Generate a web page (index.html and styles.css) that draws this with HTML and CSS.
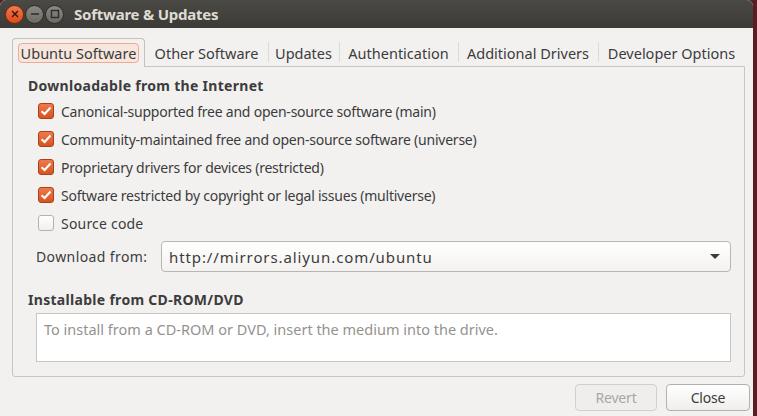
FILE: index.html
```html
<!DOCTYPE html>
<html>
<head>
<meta charset="utf-8">
<link rel="stylesheet" href="styles.css">
</head>
<body>
<div class="window">
  <div class="titlebar">
    <div class="wbtns">
      <span class="wb close"><svg width="8" height="8" viewBox="0 0 8 8"><path d="M1 1L7 7M7 1L1 7" stroke="#3a1a10" stroke-width="1.5"/></svg></span>
      <span class="wb"><svg width="10" height="8" viewBox="0 0 10 8"><path d="M1 4H9" stroke="#2e2d2a" stroke-width="1.6"/></svg></span>
      <span class="wb"><svg width="10" height="10" viewBox="0 0 10 10"><rect x="1.5" y="1.5" width="7" height="7" fill="none" stroke="#2e2d2a" stroke-width="1.4"/></svg></span>
    </div>
    <div class="title">Software &amp; Updates</div>
  </div>
  <div class="body">
    <div class="tabs">
      <div class="tab active t1"><span class="focus">Ubuntu Software</span></div>
      <div class="tab t2">Other Software</div>
      <div class="tab t3 sep">Updates</div>
      <div class="tab t4 sep">Authentication</div>
      <div class="tab t5 sep">Additional Drivers</div>
      <div class="tab t6 sep">Developer Options</div>
    </div>
    <div class="frame">
      <div class="heading">Downloadable from the Internet</div>
      <div class="checks">
        <div class="row"><span class="cb on"><svg width="12" height="10" viewBox="0 0 12 10"><path d="M1.5 5.2L4.6 8L10.5 1.5" fill="none" stroke="#fff" stroke-width="2"/></svg></span>Canonical-supported free and open-source software (main)</div>
        <div class="row"><span class="cb on"><svg width="12" height="10" viewBox="0 0 12 10"><path d="M1.5 5.2L4.6 8L10.5 1.5" fill="none" stroke="#fff" stroke-width="2"/></svg></span>Community-maintained free and open-source software (universe)</div>
        <div class="row"><span class="cb on"><svg width="12" height="10" viewBox="0 0 12 10"><path d="M1.5 5.2L4.6 8L10.5 1.5" fill="none" stroke="#fff" stroke-width="2"/></svg></span>Proprietary drivers for devices (restricted)</div>
        <div class="row"><span class="cb on"><svg width="12" height="10" viewBox="0 0 12 10"><path d="M1.5 5.2L4.6 8L10.5 1.5" fill="none" stroke="#fff" stroke-width="2"/></svg></span>Software restricted by copyright or legal issues (multiverse)</div>
        <div class="row"><span class="cb"></span><span class="src">Source code</span></div>
      </div>
      <div class="dl">
        <span class="dl-label">Download from:</span>
        <div class="combo"><span class="url">http://mirrors.aliyun.com/ubuntu</span><span class="arrow"></span></div>
      </div>
      <div class="heading h2">Installable from CD-ROM/DVD</div>
      <div class="cdbox">To install from a CD-ROM or DVD, insert the medium into the drive.</div>
    </div>
    <div class="actions">
      <button class="btn disabled">Revert</button>
      <button class="btn">Close</button>
    </div>
  </div>
</div>
</body>
</html>
```
FILE: styles.css
```css
html, body {
  margin: 0;
  padding: 0;
}
body {
  width: 757px;
  height: 416px;
  background: #5b1c26;
  overflow: hidden;
  font-family: "Noto Sans", "Open Sans", sans-serif;
  font-size: 14px;
  letter-spacing: -0.23px;
  color: #3c3c3c;
}
.window {
  width: 753px;
  height: 416px;
  background: #f2f1f0;
  border-radius: 6px 6px 0 0;
  overflow: hidden;
}
.titlebar {
  height: 28px;
  background: linear-gradient(#4a4944, #3c3b37);
  display: flex;
  align-items: center;
}
.wbtns {
  display: flex;
  gap: 1px;
  margin-left: 5px;
}
.wb {
  width: 17px;
  height: 17px;
  border-radius: 50%;
  background: linear-gradient(#8a8984, #6b6a65);
  border: 1px solid #2f2e2b;
  display: flex;
  align-items: center;
  justify-content: center;
}
.wb.close {
  background: linear-gradient(#f37a4e, #df4a16);
  border-color: #7a2a0c;
}
.title {
  margin-left: 10px;
  font-weight: bold;
  font-size: 15px;
  color: #dfdbd2;
}
.body {
  padding: 10px 8px 0 12px;
}
.tabs {
  display: flex;
  height: 28px;
  position: relative;
  z-index: 1;
  font-size: 14.5px;
  letter-spacing: 0;
}
.tab {
  display: flex;
  align-items: center;
  justify-content: center;
  height: 28px;
  box-sizing: border-box;
  white-space: nowrap;
  position: relative;
  padding-top: 1px;
}
.tab.sep::before {
  content: "";
  position: absolute;
  left: 0;
  top: 4px;
  bottom: 4px;
  width: 1px;
  background: #dcdad5;
}
.tab.active {
  border: 1px solid #c5c2bc;
  border-bottom: none;
  border-radius: 4px 4px 0 0;
  background: #f2f1f0;
  height: 29px;
  padding-top: 0;
}
.t1 { width: 133px; }
.t2 { width: 123px; }
.t3 { width: 71px; }
.t4 { width: 119px; }
.t5 { width: 140px; }
.t6 { width: 147px; }
.focus {
  border: 1px solid #eeab91;
  background: #f6e6dd;
  border-radius: 4px;
  padding: 0 2px;
  line-height: 18px;
}
.frame {
  width: 733px;
  height: 311px;
  box-sizing: border-box;
  border: 1px solid #c9c6c1;
  border-radius: 0 0 3px 3px;
  padding: 9px 15px 0 15px;
}
.heading {
  font-weight: bold;
  height: 20px;
  line-height: 20px;
  letter-spacing: 0.3px;
}
.checks {
  margin-top: 1px;
  padding-left: 10px;
}
.row {
  height: 28px;
  display: flex;
  align-items: center;
  white-space: nowrap;
}
.src {
  letter-spacing: 0.2px;
}
.cb {
  width: 16px;
  height: 16px;
  box-sizing: border-box;
  border-radius: 3px;
  border: 1px solid #b5b2ad;
  background: linear-gradient(#ffffff, #f0efed);
  margin-right: 7px;
  display: flex;
  align-items: center;
  justify-content: center;
}
.cb.on {
  border-color: #a9401a;
  background: linear-gradient(#ee7a4e, #d65420);
}
.dl {
  display: flex;
  align-items: center;
  margin-top: 4px;
  padding-left: 8px;
}
.dl-label {
  width: 125px;
  flex-shrink: 0;
  letter-spacing: 0.4px;
}
.combo {
  width: 570px;
  flex-shrink: 0;
  height: 31px;
  box-sizing: border-box;
  border: 1px solid #b9b6b0;
  border-radius: 4px;
  background: linear-gradient(#ffffff, #f3f2f0);
  display: flex;
  align-items: center;
  justify-content: space-between;
  padding: 0 10px 0 7px;
}
.url {
  font-size: 15px;
  letter-spacing: 0.9px;
}
.arrow {
  width: 0;
  height: 0;
  border-left: 5px solid transparent;
  border-right: 5px solid transparent;
  border-top: 5px solid #3c3c3c;
}
.h2 {
  margin-top: 18px;
}
.cdbox {
  margin: 3px 0 0 8px;
  width: 695px;
  height: 49px;
  box-sizing: border-box;
  border: 1px solid #c9c6c1;
  background: #ffffff;
  color: #95928e;
  padding: 5px 7px;
  font-size: 14.5px;
  letter-spacing: 0;
}
.actions {
  display: flex;
  justify-content: flex-end;
  gap: 9px;
  margin-top: 7px;
  margin-right: -5px;
}
.btn {
  font-family: inherit;
  font-size: 14px;
  letter-spacing: -0.2px;
  height: 27px;
  border-radius: 4px;
  border: 1px solid #b4b1ac;
  background: linear-gradient(#ffffff, #efeeec);
  color: #3c3c3c;
  padding: 0;
  width: 84px;
}
.btn.disabled {
  width: 82px;
  border-color: #d3d0cb;
  background: #efeeec;
  color: #aaa7a2;
}
```
